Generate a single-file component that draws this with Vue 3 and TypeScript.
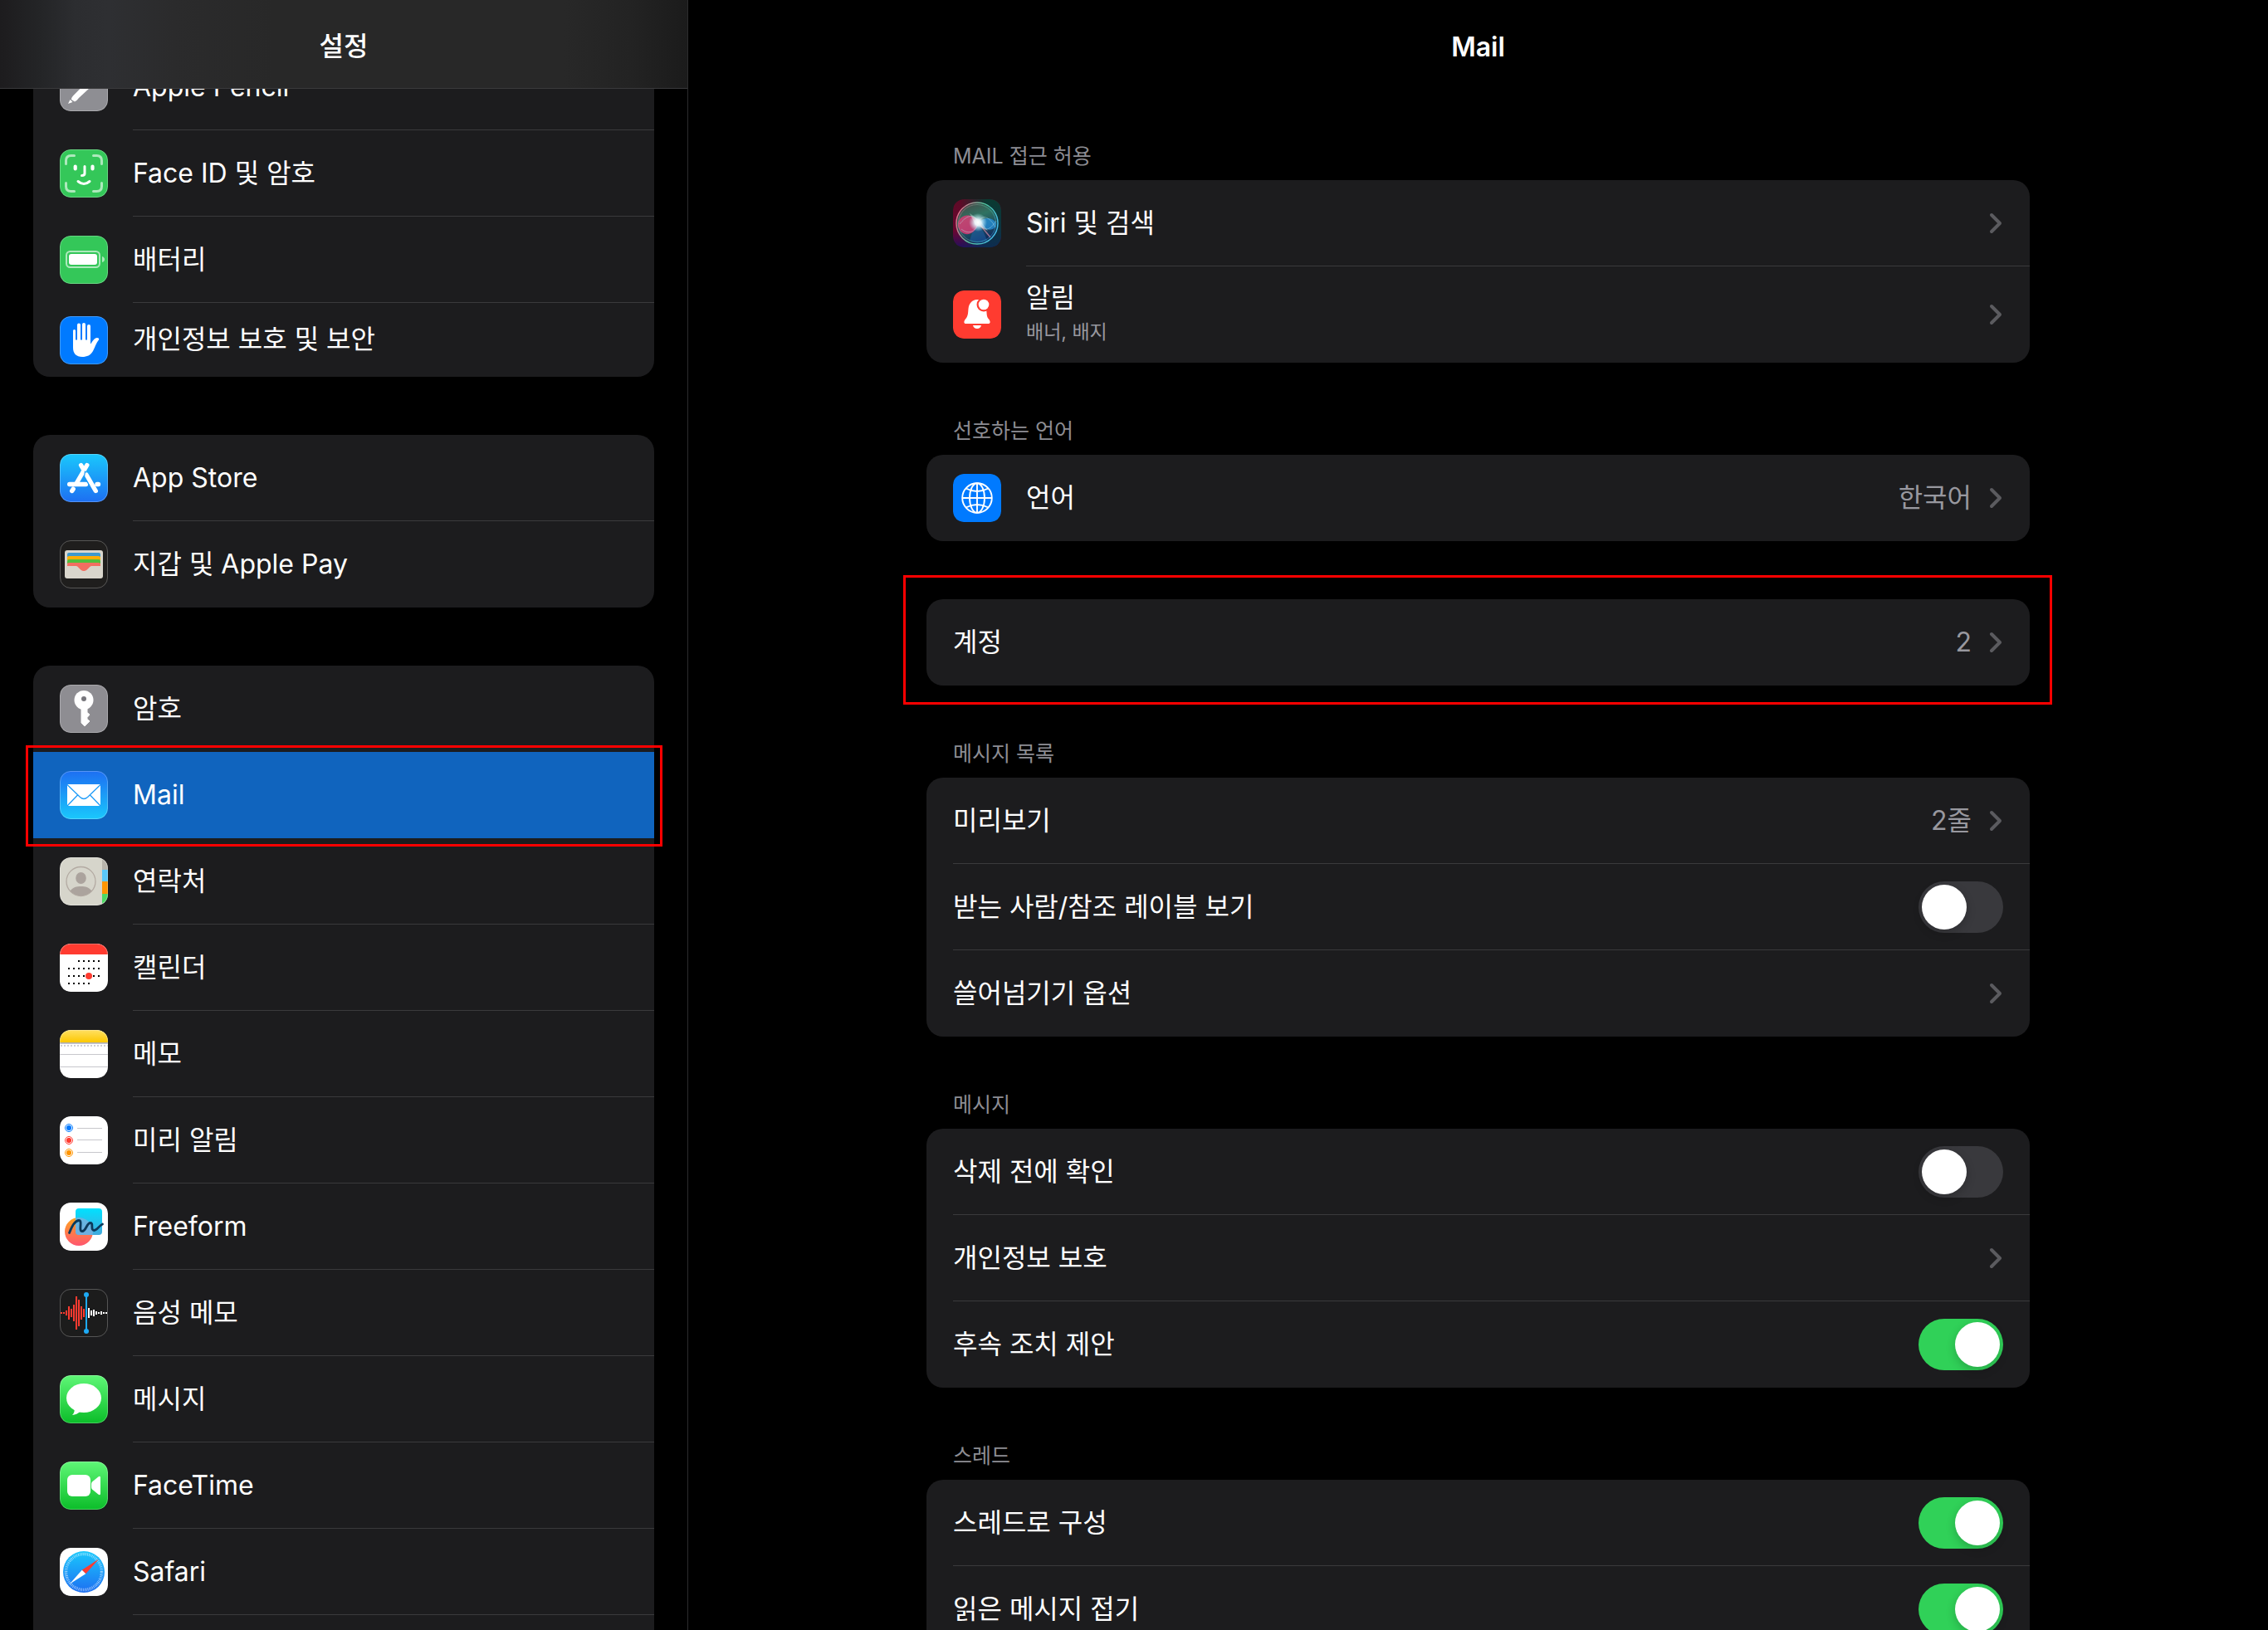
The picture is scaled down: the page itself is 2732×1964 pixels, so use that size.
<script setup lang="ts">
import { reactive } from 'vue'

interface NavItem {
  label: string
  icon: string
  selected?: boolean
  plain?: boolean
  compact?: boolean
}

interface DetailRow {
  id: string
  label: string
  icon?: string
  note?: string
  value?: string
  toggle?: boolean
}

interface DetailGroup {
  title?: string
  outlined?: boolean
  rows: DetailRow[]
}

const navGroups: NavItem[][] = [
  [
    { label: 'Apple Pencil', icon: 'pencil' },
    { label: 'Face ID 및 암호', icon: 'faceid' },
    { label: '배터리', icon: 'battery' },
    { label: '개인정보 보호 및 보안', icon: 'hand', compact: true, plain: true },
  ],
  [
    { label: 'App Store', icon: 'appstore' },
    { label: '지갑 및 Apple Pay', icon: 'wallet', plain: true },
  ],
  [
    { label: '암호', icon: 'key', plain: true },
    { label: 'Mail', icon: 'mail', selected: true, plain: true },
    { label: '연락처', icon: 'contacts' },
    { label: '캘린더', icon: 'calendar' },
    { label: '메모', icon: 'notes' },
    { label: '미리 알림', icon: 'reminders' },
    { label: 'Freeform', icon: 'freeform' },
    { label: '음성 메모', icon: 'voice' },
    { label: '메시지', icon: 'messages' },
    { label: 'FaceTime', icon: 'facetime' },
    { label: 'Safari', icon: 'safari' },
  ],
]

const detailGroups = reactive<DetailGroup[]>([
  {
    title: 'MAIL 접근 허용',
    rows: [
      { id: 'siri', label: 'Siri 및 검색', icon: 'siri' },
      { id: 'alerts', label: '알림', icon: 'bell', note: '배너, 배지' },
    ],
  },
  {
    title: '선호하는 언어',
    rows: [{ id: 'language', label: '언어', icon: 'globe', value: '한국어' }],
  },
  {
    outlined: true,
    rows: [{ id: 'accounts', label: '계정', value: '2' }],
  },
  {
    title: '메시지 목록',
    rows: [
      { id: 'preview', label: '미리보기', value: '2줄' },
      { id: 'labels', label: '받는 사람/참조 레이블 보기', toggle: false },
      { id: 'swipe', label: '쓸어넘기기 옵션' },
    ],
  },
  {
    title: '메시지',
    rows: [
      { id: 'confirm', label: '삭제 전에 확인', toggle: false },
      { id: 'privacy', label: '개인정보 보호' },
      { id: 'followup', label: '후속 조치 제안', toggle: true },
    ],
  },
  {
    title: '스레드',
    rows: [
      { id: 'organize', label: '스레드로 구성', toggle: true },
      { id: 'collapse', label: '읽은 메시지 접기', toggle: true },
    ],
  },
])

// Calendar dots: [column, row]; the highlighted day sits at column 4, row 2.
const calendarDots: [number, number][] = []
const calendarSpans: [number, number][] = [[2, 6], [0, 6], [0, 6], [0, 4]]
calendarSpans.forEach(([from, to], row) => {
  for (let col = from; col <= to; col++) calendarDots.push([col, row])
})

const recorded = [1, 1, 3, 8, 5, 10, 20, 16, 8, 5]
const upcoming = [6, 3, 4, 2, 1, 2, 1, 1]
</script>

<template>
  <div class="settings">
    <svg class="sprite" aria-hidden="true">
      <defs>
        <linearGradient id="g-store" x2="0" y2="1"><stop offset="0" stop-color="#1ac8fc" /><stop offset="1" stop-color="#1d6ff2" /></linearGradient>
        <linearGradient id="g-mail" x2="0" y2="1"><stop offset="0" stop-color="#1d6ff2" /><stop offset="1" stop-color="#1ac8fc" /></linearGradient>
        <linearGradient id="g-green" x2="0" y2="1"><stop offset="0" stop-color="#5ff777" /><stop offset="1" stop-color="#0bbd29" /></linearGradient>
        <linearGradient id="g-notes" x2="0" y2="1"><stop offset="0" stop-color="#ffe063" /><stop offset="1" stop-color="#fdc800" /></linearGradient>
        <linearGradient id="g-ball" x2="0" y2="1"><stop offset="0" stop-color="#ffa51f" /><stop offset="1" stop-color="#ff566f" /></linearGradient>
        <linearGradient id="g-note" x2="0" y2="1"><stop offset="0" stop-color="#00e1ff" /><stop offset="1" stop-color="#43a9dc" /></linearGradient>
        <linearGradient id="g-siri-l" x2="0" y2="1"><stop offset="0" stop-color="#5c0b26" /><stop offset=".65" stop-color="#6d0630" /><stop offset="1" stop-color="#240f5c" /></linearGradient>
        <linearGradient id="g-siri-r" x2="0" y2="1"><stop offset="0" stop-color="#0a3a31" /><stop offset=".6" stop-color="#0d3440" /><stop offset="1" stop-color="#0c2c50" /></linearGradient>
        <linearGradient id="g-fade"><stop offset=".15" stop-color="#fff" stop-opacity="0" /><stop offset=".7" stop-color="#fff" /></linearGradient>
        <mask id="m-fade"><rect width="58" height="58" fill="url(#g-fade)" /></mask>
        <linearGradient id="g-ring" x1="0" y1=".3" x2="1" y2=".7"><stop offset="0" stop-color="#e0708c" /><stop offset=".5" stop-color="#4fc79e" /><stop offset="1" stop-color="#46b8ee" /></linearGradient>
        <linearGradient id="g-orb" x2=".4" y2="1"><stop offset="0" stop-color="#4a4444" /><stop offset=".45" stop-color="#2f7362" /><stop offset="1" stop-color="#0f2c5c" /></linearGradient>
        <radialGradient id="g-glow"><stop offset="0" stop-color="#fff" /><stop offset=".35" stop-color="#e8fbff" stop-opacity=".9" /><stop offset="1" stop-color="#bfefff" stop-opacity="0" /></radialGradient>
      </defs>

      <symbol id="i-pencil" viewBox="0 0 58 58">
        <rect width="58" height="58" rx="13" fill="#8e8e93" />
        <path d="M14 44Q14 41.500 16 39.500L42 13L50 17L23 42Q21 45 18 46.500Z" fill="#fff" />
        <path d="M10 49L12.500 44L15.500 47Z" fill="#fff" />
      </symbol>
      <symbol id="i-faceid" viewBox="0 0 58 58">
        <rect width="58" height="58" rx="13" fill="#34c759" />
        <g fill="none" stroke="#fff" stroke-linecap="round" stroke-width="3">
          <path opacity=".6" d="M7.500 17.500V13.500Q7.500 7.500 13.500 7.500H17.500M40.500 7.500H44.500Q50.500 7.500 50.500 13.500V17.500M50.500 40.500V44.500Q50.500 50.500 44.500 50.500H40.500M17.500 50.500H13.500Q7.500 50.500 7.500 44.500V40.500" />
          <path d="M30 20.500V29Q30 31.500 26.500 31.500M22 38.500Q29 44.500 36 38.500" />
          <path stroke-width="4.200" d="M18.700 20.500V23.500M39.500 20.500V23.500" />
        </g>
      </symbol>
      <symbol id="i-battery" viewBox="0 0 58 58">
        <rect width="58" height="58" rx="13" fill="#34c759" />
        <rect x="8" y="19" width="40" height="19" rx="4.500" fill="none" stroke="#fff" stroke-width="2" opacity=".6" />
        <rect x="11" y="22" width="34" height="13" rx="3" fill="#fff" />
        <path d="M51 25Q54 26 54 28.500T51 32Z" fill="#fff" opacity=".6" />
      </symbol>
      <symbol id="i-hand" viewBox="0 0 58 58">
        <rect width="58" height="58" rx="13" fill="#007aff" />
        <g fill="#fff">
          <rect x="16" y="16" width="3" height="17" rx="1.500" />
          <rect x="21" y="8.500" width="4" height="24" rx="2" />
          <rect x="27" y="8" width="4" height="24" rx="2" />
          <rect x="33" y="10" width="4" height="24" rx="2" />
          <path d="M16 28.500V38C16 45 20 49 27 49C33 49 37 47 40 42C42.500 37.500 43.500 32.500 47.300 28Q47.500 26 45 26C41.500 26 40 30 37 33.500V28.500Z" />
        </g>
      </symbol>
      <symbol id="i-appstore" viewBox="0 0 58 58">
        <rect width="58" height="58" rx="13" fill="url(#g-store)" />
        <g fill="none" stroke="#fff" stroke-width="5.400" stroke-linecap="round">
          <path d="M32.800 13.500L20 35.500M25.600 13.500L29 19.500M43.300 44.500L32 25M14.700 44.500L16.200 42.200M45 36.500H46.500" />
          <path d="M11.700 36.500H31.500" />
        </g>
        <path d="M30.500 20.500L29.500 27.500L36 38.500" fill="none" stroke="#1b9bf8" stroke-width="1.200" />
      </symbol>
      <symbol id="i-wallet" viewBox="0 0 58 58">
        <rect width="58" height="58" rx="13" fill="#1f1e1d" />
        <rect x="6" y="12" width="46" height="34" rx="3" fill="#d9d6cc" />
        <path d="M9 20V17Q9 15 11 15H47Q49 15 49 17V20Z" fill="#3e99cd" />
        <path d="M9 24V21Q9 19 11 19H47Q49 19 49 21V24Z" fill="#ffae02" />
        <path d="M9 28V25Q9 23 11 23H47Q49 23 49 25V28Z" fill="#50be3d" />
        <path d="M9 31V29Q9 27 11 27H47Q49 27 49 29V31H38.500C35 31 34 37 29 37S23 31 19.500 31Z" fill="#f36e61" />
      </symbol>
      <symbol id="i-key" viewBox="0 0 58 58">
        <rect width="58" height="58" rx="13" fill="#8e8d92" />
        <circle cx="29" cy="18.500" r="11.500" fill="#fff" />
        <path d="M26 28V46L30 50L36 44L33 41.500V39.500L36 36L33 33.500V28Z" fill="#fff" stroke="#fff" stroke-linejoin="round" />
        <circle cx="29" cy="17" r="3" fill="#77767c" />
      </symbol>
      <symbol id="i-mail" viewBox="0 0 58 58">
        <rect width="58" height="58" rx="13" fill="url(#g-mail)" />
        <rect x="9" y="16" width="40" height="26" rx="1" fill="#fff" />
        <path d="M9 16.500L24.500 31.500Q29 35.500 33.500 31.500L49 16.500M21.500 29L9 42M36.500 29L49 42" fill="none" stroke="#1f9cf8" stroke-width="1.300" />
      </symbol>
      <symbol id="i-contacts" viewBox="0 0 58 58">
        <rect width="58" height="58" rx="13" fill="#d6d5cb" />
        <path d="M51 2.200Q58 5 58 13V15H51Z" fill="#b7b4ac" />
        <path d="M51 15H58V29H51Z" fill="#5ac8fa" />
        <path d="M51 29H58V44H51Z" fill="#ff9500" />
        <path d="M51 44H58V45Q58 53 51 55.800Z" fill="#4cd964" />
        <circle cx="25.500" cy="29" r="17.500" fill="none" stroke="#b3aaa2" stroke-width="1.300" />
        <ellipse cx="25.500" cy="25" rx="6.300" ry="7" fill="#aba39d" />
        <path d="M12.500 40.500C16 36 20 35 25.500 35S35 36 38.500 40.500A17.500 17.500 0 0 1 12.500 40.500Z" fill="#aba39d" />
      </symbol>
      <symbol id="i-calendar" viewBox="0 0 58 58">
        <rect width="58" height="58" rx="13" fill="#fff" />
        <path d="M0 13Q0 0 13 0H45Q58 0 58 13Z" fill="#ff3b30" />
        <rect v-for="([c, r], i) in calendarDots" :key="i" :x="10 + c * 6" :y="20 + r * 9" width="2" height="2" fill="#000" />
        <circle cx="35" cy="39" r="4" fill="#ff3b30" />
      </symbol>
      <symbol id="i-notes" viewBox="0 0 58 58">
        <rect width="58" height="58" rx="13" fill="#fff" />
        <path d="M0 15V13Q0 0 13 0H45Q58 0 58 13V15Z" fill="url(#g-notes)" />
        <path d="M0 15.500H58" stroke="#aeaeb2" />
        <path d="M0 16.500H58M0 29.500H58M0 44.500H58" stroke="#c7c7cc" />
        <path d="M1 19H58" stroke="#cfcfd3" stroke-width="2" stroke-dasharray="2 2" />
      </symbol>
      <symbol id="i-reminders" viewBox="0 0 58 58">
        <rect width="58" height="58" rx="13" fill="#fff" />
        <g fill="#007aff" stroke="#007aff"><circle cx="11" cy="14" r="4.500" fill="none" /><circle cx="11" cy="14" r="2.700" /></g>
        <g fill="#ff3b30" stroke="#ff3b30"><circle cx="11" cy="29" r="4.500" fill="none" /><circle cx="11" cy="29" r="2.700" /></g>
        <g fill="#ff9500" stroke="#ff9500"><circle cx="11" cy="44" r="4.500" fill="none" /><circle cx="11" cy="44" r="2.700" /></g>
        <path d="M21 14.500H51M21 28.500H51M21 43.500H51" stroke="#c7c7cc" />
      </symbol>
      <symbol id="i-freeform" viewBox="0 0 58 58">
        <rect width="58" height="58" rx="13" fill="#fff" />
        <circle cx="23" cy="35" r="17" fill="url(#g-ball)" />
        <rect x="19" y="7" width="32" height="32" rx="4" fill="url(#g-note)" />
        <path d="M19 18.500A17 17 0 0 1 39.500 39H23Q19 39 19 35Z" fill="#7fb0dd" opacity=".75" />
        <path d="M11.500 36.500C14 30 18 21.500 23 21.500C28 21.500 22 34.500 27 34.500C32 34.500 32 24.500 37 24.500C41 24.500 36.500 33.500 41.500 33.500C45 33.500 47 28 51.500 26" fill="none" stroke="#0c3a5b" stroke-width="2.800" stroke-linecap="round" />
      </symbol>
      <symbol id="i-voice" viewBox="0 0 58 58">
        <rect width="58" height="58" rx="13" fill="#1c1c1c" />
        <rect v-for="(h, i) in recorded" :key="'r' + i" :x="1 + i * 3" :y="29 - h" width="2" :height="h * 2" fill="#ff3b30" />
        <rect v-for="(h, i) in upcoming" :key="'u' + i" :x="34 + i * 3" :y="29 - h" width="2" :height="h * 2" fill="#fff" />
        <path d="M32 7V51" stroke="#1eaaf5" stroke-width="2" />
        <circle cx="32" cy="7" r="3" fill="#1eaaf5" />
        <circle cx="32" cy="51" r="3" fill="#1eaaf5" />
      </symbol>
      <symbol id="i-messages" viewBox="0 0 58 58">
        <rect width="58" height="58" rx="13" fill="url(#g-green)" />
        <ellipse cx="29" cy="27.500" rx="21" ry="17.500" fill="#fff" />
        <path d="M17.500 40Q18.500 44.500 15 48Q20.500 47.500 25 43.500Z" fill="#fff" />
      </symbol>
      <symbol id="i-facetime" viewBox="0 0 58 58">
        <rect width="58" height="58" rx="13" fill="url(#g-green)" />
        <rect x="9" y="16" width="28" height="26" rx="6" fill="#fff" />
        <path d="M38 27Q38 25.500 39 24.500L46 18.700Q49 16.500 49 19.500V38.500Q49 41.500 46 39.300L39 33.500Q38 32.500 38 31Z" fill="#fff" />
      </symbol>
      <symbol id="i-safari" viewBox="0 0 58 58">
        <rect width="58" height="58" rx="13" fill="#fff" />
        <circle cx="29" cy="29" r="25" fill="url(#g-store)" />
        <circle cx="29" cy="29" r="21.500" fill="none" stroke="#fff" stroke-width="3.500" stroke-dasharray=".6 1.276" opacity=".8" />
        <path d="M47 13.500L26.700 26.700L31.300 31.300Z" fill="#ff3b30" />
        <path d="M12 43.500L26.700 26.700L31.300 31.300Z" fill="#fff" />
      </symbol>
      <symbol id="i-siri" viewBox="0 0 58 58">
        <rect width="58" height="58" rx="13" fill="url(#g-siri-l)" />
        <rect width="58" height="58" rx="13" fill="url(#g-siri-r)" mask="url(#m-fade)" />
        <circle cx="29" cy="29" r="24" fill="url(#g-orb)" />
        <path d="M28 29Q22 42 20 50Q29 55 41 50Q37 38 30 29Z" fill="#1f62a8" opacity=".55" />
        <path d="M6 33C4 21 20 12 31 28C26 46 10 46 6 33Z" fill="#e23a76" opacity=".8" />
        <path d="M31 29C36 21 49 21 52 30C51 39 38 39 31 29Z" fill="#2590dc" opacity=".75" />
        <path d="M8 30C16 20 24 16 31 28S44 38 52 26M10 36C20 44 28 38 31 28S44 20 51 34" fill="none" stroke="#bfe9ee" stroke-width=".800" opacity=".5" />
        <path d="M31 29L45 46" stroke="#d98aa4" stroke-width="1.500" opacity=".7" />
        <circle cx="30" cy="28" r="11" fill="url(#g-glow)" />
        <path d="M20 17L33 26L42 38L27 31Z" fill="#fff" opacity=".35" />
        <circle cx="29" cy="29" r="25" fill="none" stroke="url(#g-ring)" stroke-width="1.500" />
        <circle cx="29" cy="29" r="22.500" fill="none" stroke="url(#g-ring)" stroke-width=".800" opacity=".6" />
      </symbol>
      <symbol id="i-bell" viewBox="0 0 58 58">
        <rect width="58" height="58" rx="13" fill="#ff3b30" />
        <path d="M29 11C22.500 11.500 19 16 18.500 22C18 28 18 31 15 34.500C12.500 37.500 13 40 15.500 40H42.500C45 40 45.500 37.500 43 34.500C40 31 41 28 40 22C39 14 36 10.500 29 11Z" fill="#fff" />
        <path d="M24 42H34Q33 46 29 46T24 42Z" fill="#fff" />
        <circle cx="37" cy="17" r="8.500" fill="#ff3b30" />
        <circle cx="37" cy="17" r="6.300" fill="#fff" />
      </symbol>
      <symbol id="i-globe" viewBox="0 0 58 58">
        <rect width="58" height="58" rx="13" fill="#007aff" />
        <g fill="none" stroke="#fff" stroke-width="1.900">
          <circle cx="29" cy="29" r="17.800" />
          <ellipse cx="29" cy="29" rx="9" ry="17.800" />
          <path d="M29 11V47M11 29H47M15.500 17.500Q29 24.500 42.500 17.500M15.500 40.500Q29 33.500 42.500 40.500" />
        </g>
      </symbol>
    </svg>

    <aside class="sidebar">
      <header class="bar sidebar-bar">
        <h1 class="bar-title">설정</h1>
      </header>
      <nav class="nav" aria-label="설정">
        <ul v-for="(group, g) in navGroups" :key="g" class="card nav-card">
          <li v-for="item in group" :key="item.label" class="nav-item" :class="{ selected: item.selected }">
            <a href="#" class="row" :class="{ compact: item.compact, plain: item.plain }" :aria-current="item.selected ? 'page' : undefined">
              <svg class="icon edged" aria-hidden="true"><use :href="'#i-' + item.icon" /></svg>
              <span class="row-body">{{ item.label }}</span>
            </a>
          </li>
        </ul>
      </nav>
    </aside>

    <main class="detail">
      <header class="bar">
        <h2 class="bar-title latin">Mail</h2>
      </header>
      <div class="sections">
        <section v-for="(group, g) in detailGroups" :key="g" class="section" :class="{ outlined: group.outlined }">
          <h3 v-if="group.title" class="section-title">{{ group.title }}</h3>
          <div class="card">
            <component
              :is="row.toggle === undefined ? 'button' : 'label'"
              v-for="(row, r) in group.rows"
              :key="row.id"
              class="row"
              :class="{ plain: r === group.rows.length - 1, tall: row.note }"
            >
              <svg v-if="row.icon" class="icon" aria-hidden="true"><use :href="'#i-' + row.icon" /></svg>
              <span class="row-body">
                <span class="row-text">
                  <span class="row-label">{{ row.label }}</span>
                  <span v-if="row.note" class="row-note">{{ row.note }}</span>
                </span>
                <span v-if="row.value" class="row-value">{{ row.value }}</span>
                <input v-if="row.toggle !== undefined" v-model="row.toggle" type="checkbox" role="switch" class="switch" />
                <svg v-else class="chevron" viewBox="0 0 18 28" aria-hidden="true">
                  <path d="M4 4L14 14L4 24" fill="none" stroke="#5b5b5f" stroke-width="4" stroke-linecap="round" stroke-linejoin="round" />
                </svg>
              </span>
            </component>
          </div>
        </section>
      </div>
    </main>
  </div>
</template>

<style>
body {
  margin: 0;
  background: #000;
}
</style>

<style scoped>
.settings {
  display: flex;
  height: 100vh;
  overflow: hidden;
  background: #000;
  color: #fff;
  font-family: Inter, "Noto Sans CJK KR", sans-serif;
  font-size: 32px;
  line-height: 42px;
}

.sprite {
  position: absolute;
  width: 0;
  height: 0;
}

.sidebar {
  flex: none;
  display: flex;
  flex-direction: column;
  box-sizing: border-box;
  width: 829px;
  border-right: 1px solid #2c2c2e;
}

.bar {
  flex: none;
  display: flex;
  align-items: center;
  justify-content: center;
  box-sizing: border-box;
  height: 107px;
  padding-top: 6px;
}

.sidebar-bar {
  border-bottom: 1px solid #3a3a3c;
  background: linear-gradient(90deg, #1d1c1e 0, #242527 50px, #2c2d30 90px, #2e2f32 130px, #2b2b2c 210px, #282828 330px, #282828 680px, #232323 760px, #1b1b1b 828px);
}

.bar-title {
  margin: 0;
  font-size: 32px;
  font-weight: 500;
}

.bar-title.latin {
  font-weight: 600;
}

/* The list is scrolled so that its first row is half hidden by the bar. */
.nav {
  flex: 1;
  min-height: 0;
  overflow: hidden;
  padding: 0 40px;
}

.card {
  margin: 0;
  padding: 0;
  border-radius: 20px;
  background: #1c1c1e;
  list-style: none;
}

.nav-card + .nav-card {
  margin-top: 70px;
}

.nav-card:first-child {
  margin-top: -54px;
}

.nav-card:last-child {
  padding-bottom: 104px;
}

.nav-item {
  position: relative;
}

.nav-item.selected {
  background: #1064be;
}

.nav-item.selected::after {
  content: "";
  position: absolute;
  inset: -8px -10px -10px -9px;
  border: 3px solid #f00;
  pointer-events: none;
}

.row {
  display: flex;
  align-items: center;
  gap: 30px;
  box-sizing: border-box;
  width: 100%;
  height: 104px;
  padding: 0 0 0 32px;
  border: 0;
  background: none;
  color: inherit;
  font: inherit;
  text-align: left;
  text-decoration: none;
}

.row.compact {
  height: 89px;
}

.row.tall {
  height: 116px;
}

.icon {
  flex: none;
  width: 58px;
  height: 58px;
  border-radius: 13px;
}

.icon.edged {
  outline: 1px solid rgba(255, 255, 255, 0.25);
  outline-offset: -1px;
}

.row-body {
  flex: 1;
  display: flex;
  align-items: center;
  box-sizing: border-box;
  height: 100%;
  border-bottom: 1px solid #3a3a3c;
}

.row.plain .row-body {
  border-bottom-color: transparent;
}

.detail {
  flex: 1;
  min-width: 0;
}

.detail .row-body {
  padding-right: 32px;
}

.sections {
  width: min(1329px, 100% - 64px);
  margin: 0 auto;
}

.section {
  position: relative;
  padding-top: 70px;
}

.section:first-child {
  padding-top: 69px;
}

.section-title {
  margin: -4px 0 0;
  padding: 0 32px 13px;
  color: #8d8d93;
  font-size: 25px;
  font-weight: 400;
  line-height: 32px;
}

.section.outlined::after {
  content: "";
  position: absolute;
  inset: 41px -27px -23px -28px;
  border: 3px solid #f00;
  pointer-events: none;
}

.row-text {
  flex: 1;
  display: flex;
  flex-direction: column;
}

.row-note {
  color: #98989f;
  font-size: 23px;
  line-height: 40px;
}

.row-value {
  margin-right: 20px;
  color: #98989f;
}

.chevron {
  flex: none;
  width: 18px;
  height: 28px;
}

.switch {
  appearance: none;
  flex: none;
  width: 102px;
  height: 62px;
  margin: 0;
  padding: 4px;
  box-sizing: border-box;
  border-radius: 31px;
  background: #39393d;
}

.switch::before {
  content: "";
  display: block;
  width: 54px;
  height: 54px;
  border-radius: 50%;
  background: #fff;
  box-shadow: 0 4px 12px rgba(0, 0, 0, 0.2);
}

.switch:checked {
  background: #30d158;
}

.switch:checked::before {
  margin-left: auto;
}
</style>
